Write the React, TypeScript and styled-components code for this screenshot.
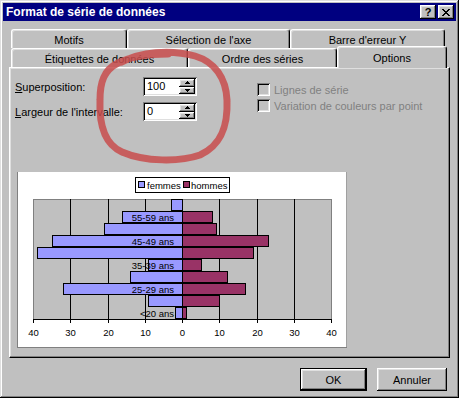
import React from 'react';
import styled, { createGlobalStyle, css } from 'styled-components';

const GlobalStyle = createGlobalStyle`
  html, body {
    margin: 0;
    padding: 0;
    background: #c0c0c0;
  }
  body {
    font-family: "Liberation Sans", Arial, sans-serif;
    font-size: 11px;
    color: #000;
  }
`;

const raised = css`
  box-shadow: inset -1px -1px #000, inset 1px 1px #fff, inset -2px -2px #808080,
    inset 2px 2px #dfdfdf;
`;

const sunken = css`
  box-shadow: inset 1px 1px #808080, inset -1px -1px #fff, inset 2px 2px #000,
    inset -2px -2px #dfdfdf;
`;

const femmes = [3, 16, 21, 35, 39, 9, 14, 32, 9, 2];
const hommes = [0, 8, 9, 23, 19, 5, 12, 17, 10, 1];
const labels: Record<number, string> = {
  1: '55-59 ans',
  3: '45-49 ans',
  5: '35-39 ans',
  7: '25-29 ans',
  9: '<20 ans',
};

const PLOT_L = 16;
const PLOT_T = 27;
const PLOT_W = 298;
const ROW_H = 12;
const ZERO = PLOT_L + PLOT_W / 2;
const UNIT = PLOT_W / 80;

const UpArrow = () => (
  <svg width="5" height="3" viewBox="0 0 5 3" shapeRendering="crispEdges">
    <path d="M2 0h1v1h1v1h1v1h-5v-1h1v-1h1z" fill="#000" />
  </svg>
);

const DownArrow = () => (
  <svg width="5" height="3" viewBox="0 0 5 3" shapeRendering="crispEdges">
    <path d="M0 0h5v1h-1v1h-1v1h-1v-1h-1v-1h-1z" fill="#000" />
  </svg>
);

const Spinner = ({ value }: { value: string }) => (
  <SpinBox>
    <SpinValue>{value}</SpinValue>
    <SpinButtons>
      <SpinArrow>
        <UpArrow />
      </SpinArrow>
      <SpinArrow>
        <DownArrow />
      </SpinArrow>
    </SpinButtons>
  </SpinBox>
);

export default function App() {
  const ticks = Array.from({ length: 9 }, (_, k) => Math.round(PLOT_L + k * (PLOT_W / 8)));

  return (
    <>
      <GlobalStyle />
      <Window>
        <TitleBar>
          <Title>Format de série de données</Title>
          <CaptionButtons>
            <CaptionButton>?</CaptionButton>
            <CaptionButton>
              <svg width="8" height="7" viewBox="0 0 8 7" shapeRendering="crispEdges">
                <path d="M0 0h2v1h-2zM6 0h2v1h-2zM1 1h2v1h-2zM5 1h2v1h-2zM2 2h4v1h-4zM3 3h2v1h-2zM2 4h4v1h-4zM1 5h2v1h-2zM5 5h2v1h-2zM0 6h2v1h-2zM6 6h2v1h-2z" fill="#000" />
              </svg>
            </CaptionButton>
          </CaptionButtons>
        </TitleBar>

        <Tabs>
          <BackRow>
            <Tab $w={116}>Motifs</Tab>
            <Tab $w={163}>Sélection de l'axe</Tab>
            <Tab $w={155}>Barre d'erreur Y</Tab>
          </BackRow>
          <FrontRow>
            <Tab $w={177}>Étiquettes de données</Tab>
            <Tab $w={149}>Ordre des séries</Tab>
            <Tab $w={110} $active>
              Options
            </Tab>
          </FrontRow>
        </Tabs>

        <Panel>
          <TopSection>
            <FormGrid>
              <FieldLabel>
                <u>S</u>uperposition:
              </FieldLabel>
              <Spinner value="100" />
              <FieldLabel>
                <u>L</u>argeur de l'intervalle:
              </FieldLabel>
              <Spinner value="0" />
            </FormGrid>

            <CheckList>
              <CheckRow>
                <CheckBox />
                <DisabledText>Lignes de série</DisabledText>
              </CheckRow>
              <CheckRow>
                <CheckBox />
                <DisabledText>Variation de couleurs par point</DisabledText>
              </CheckRow>
            </CheckList>
          </TopSection>

          <ChartFrame>
            <svg width="330" height="176" viewBox="0 0 330 176">
              <rect x="118.5" y="5.5" width="94" height="15" fill="#fff" stroke="#000" />
              <rect x="121.5" y="9.5" width="6" height="6" fill="#9999ff" stroke="#000" />
              <ChartText x="130" y="16.5">femmes</ChartText>
              <rect x="166.5" y="9.5" width="6" height="6" fill="#993366" stroke="#000" />
              <ChartText x="174" y="16.5">hommes</ChartText>

              <rect
                x={PLOT_L + 0.5}
                y={PLOT_T + 0.5}
                width={PLOT_W}
                height={ROW_H * 10}
                fill="#c0c0c0"
                stroke="#808080"
              />
              {ticks.slice(1, 8).map((x) => (
                <line key={x} x1={x + 0.5} x2={x + 0.5} y1={PLOT_T} y2={PLOT_T + 120} stroke="#000" />
              ))}

              {femmes.map((f, i) => {
                const top = PLOT_T + i * ROW_H;
                const left = Math.round(ZERO - f * UNIT);
                return (
                  <rect
                    key={`f${i}`}
                    x={left + 0.5}
                    y={top + 0.5}
                    width={Math.round(ZERO) - left}
                    height={ROW_H - 1}
                    fill="#9999ff"
                    stroke="#000"
                  />
                );
              })}
              {hommes.map((h, i) => {
                const top = PLOT_T + i * ROW_H;
                const right = Math.round(ZERO + h * UNIT);
                return (
                  <rect
                    key={`h${i}`}
                    x={Math.round(ZERO) + 0.5}
                    y={top + 0.5}
                    width={right - Math.round(ZERO)}
                    height={ROW_H - 1}
                    fill="#993366"
                    stroke="#000"
                  />
                );
              })}

              {Object.entries(labels).map(([row, text]) => (
                <ChartText
                  key={row}
                  x="157"
                  y={PLOT_T + Number(row) * ROW_H + 10}
                  textAnchor="end"
                >
                  {text}
                </ChartText>
              ))}

              <line x1={PLOT_L} x2={PLOT_L + PLOT_W + 1} y1={147.5} y2={147.5} stroke="#000" />
              {ticks.map((x, k) => (
                <g key={`t${k}`}>
                  <line x1={x + 0.5} x2={x + 0.5} y1={147} y2={151} stroke="#000" />
                  <ChartText x={x + 0.5} y={164} textAnchor="middle">
                    {Math.abs(k * 10 - 40)}
                  </ChartText>
                </g>
              ))}
            </svg>
          </ChartFrame>
        </Panel>

        <ButtonRow>
          <DialogButton $w={67} $default>
            OK
          </DialogButton>
          <DialogButton $w={70}>Annuler</DialogButton>
        </ButtonRow>

        <Annotation width="459" height="398" viewBox="0 0 459 398">
          <defs>
            <filter id="soft" x="-10%" y="-10%" width="120%" height="120%">
              <feGaussianBlur stdDeviation="0.7" />
            </filter>
          </defs>
          <path
            d="M122 62 C140 52 170 49 195 56 C215 62 226 78 227 100 C228 125 222 145 200 155 C180 162 145 162 122 152 C104 144 99 125 100 100 C100 82 104 70 118 63 C130 57 150 54 168 54"
            fill="none"
            stroke="#c84e4e"
            strokeOpacity="0.85"
            strokeWidth="7"
            strokeLinecap="round"
            filter="url(#soft)"
          />
        </Annotation>
      </Window>
    </>
  );
}

const Window = styled.div`
  position: relative;
  width: 459px;
  height: 398px;
  box-sizing: border-box;
  padding: 3px;
  background: #c0c0c0;
  display: flex;
  flex-direction: column;
  box-shadow: inset -1px -1px #000, inset 1px 1px #dfdfdf, inset -2px -2px #808080,
    inset 2px 2px #fff;
`;

const TitleBar = styled.div`
  height: 18px;
  background: #000080;
  display: flex;
  align-items: center;
  justify-content: space-between;
  padding: 0 2px 0 3px;
`;

const Title = styled.span`
  color: #fff;
  font-weight: bold;
  font-size: 12px;
`;

const CaptionButtons = styled.div`
  display: flex;
  gap: 2px;
`;

const CaptionButton = styled.div`
  width: 16px;
  height: 14px;
  box-sizing: border-box;
  background: #c0c0c0;
  ${raised};
  display: flex;
  align-items: center;
  justify-content: center;
  font-weight: bold;
  font-size: 11px;
  line-height: 1;
`;

const Tabs = styled.div`
  margin: 8px 0 0 6px;
  padding-left: 2px;
`;

const BackRow = styled.div`
  display: flex;
  height: 19px;
`;

const FrontRow = styled.div`
  display: flex;
  align-items: flex-end;
  height: 21px;
  margin-top: -2px;
`;

const Tab = styled.div<{ $w: number; $active?: boolean }>`
  width: ${(p) => p.$w}px;
  height: ${(p) => (p.$active ? 22 : 19)}px;
  box-sizing: border-box;
  flex-shrink: 0;
  background: #c0c0c0;
  border-top: 1px solid #fff;
  border-left: 1px solid #fff;
  border-right: 1px solid #000;
  border-radius: 3px 3px 0 0;
  box-shadow: inset -1px 0 #808080, inset 1px 1px #dfdfdf;
  display: flex;
  justify-content: center;
  align-items: center;
  padding-top: ${(p) => (p.$active ? 1 : 2)}px;
  position: relative;
  ${(p) =>
    p.$active &&
    css`
      margin-bottom: -1px;
      z-index: 2;
    `}
`;

const Panel = styled.div`
  width: 441px;
  height: 291px;
  box-sizing: border-box;
  margin-left: 6px;
  padding: 9px 0 0 5px;
  border-top: 1px solid #fff;
  border-left: 1px solid #fff;
  border-right: 1px solid #000;
  border-bottom: 1px solid #000;
  box-shadow: inset -1px -1px #808080, inset 1px 1px #dfdfdf;
`;

const TopSection = styled.div`
  display: flex;
  align-items: flex-start;
`;

const FormGrid = styled.div`
  display: grid;
  grid-template-columns: 128px 54px;
  grid-auto-rows: 19px;
  row-gap: 6px;
`;

const FieldLabel = styled.label`
  align-self: center;
  white-space: nowrap;
`;

const SpinBox = styled.div`
  display: flex;
  box-sizing: border-box;
  height: 19px;
  padding: 2px;
  background: #fff;
  ${sunken};
`;

const SpinValue = styled.span`
  flex: 1;
  padding: 0 0 0 2px;
  line-height: 15px;
`;

const SpinButtons = styled.div`
  display: flex;
  flex-direction: column;
  width: 16px;
`;

const SpinArrow = styled.div`
  flex: 1;
  background: #c0c0c0;
  ${raised};
  display: flex;
  align-items: center;
  justify-content: center;
`;

const CheckList = styled.div`
  display: flex;
  flex-direction: column;
  gap: 3px;
  margin: 6px 0 0 60px;
`;

const CheckRow = styled.div`
  display: flex;
  align-items: center;
  gap: 4px;
  height: 13px;
`;

const CheckBox = styled.span`
  width: 13px;
  height: 13px;
  box-sizing: border-box;
  background: #c0c0c0;
  ${sunken};
`;

const DisabledText = styled.span`
  color: #808080;
  white-space: nowrap;
`;

const ChartFrame = styled.div`
  width: 330px;
  height: 176px;
  margin: 51px 0 0 2px;
  background: #fff;
  box-shadow: inset 1px 0 #808080, inset 0 -1px #808080, inset -1px 0 #a0a0a0;

  svg {
    display: block;
  }
`;

const ChartText = styled.text`
  font-family: "Liberation Sans", Arial, sans-serif;
  font-size: 9.5px;
  fill: #000;
`;

const ButtonRow = styled.div`
  display: flex;
  justify-content: flex-end;
  gap: 10px;
  margin-top: 10px;
  padding-right: 9px;
`;

const DialogButton = styled.button<{ $w: number; $default?: boolean }>`
  width: ${(p) => p.$w}px;
  height: 23px;
  box-sizing: border-box;
  padding: 0;
  font-family: "Liberation Sans", Arial, sans-serif;
  font-size: 11px;
  color: #000;
  background: #c0c0c0;
  border: none;
  ${raised};
  ${(p) =>
    p.$default &&
    css`
      border: 1px solid #000;
    `}
`;

const Annotation = styled.svg`
  position: absolute;
  left: 0;
  top: 0;
  pointer-events: none;
  z-index: 10;
`;
